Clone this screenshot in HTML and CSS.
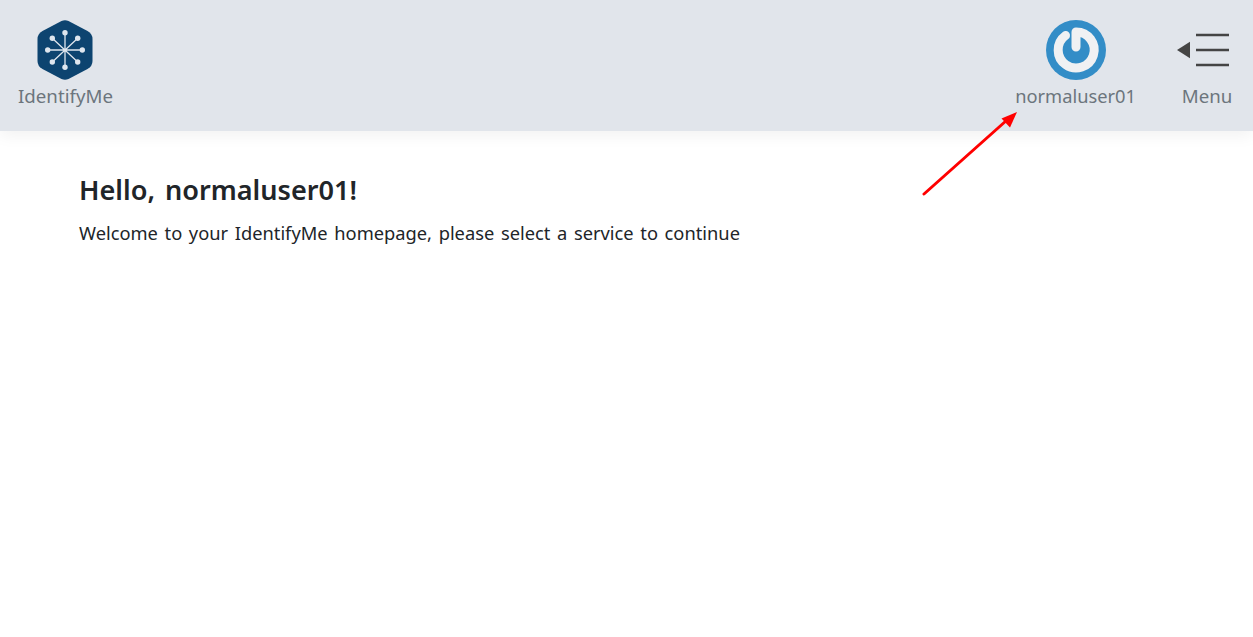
FILE: index.html
```html
<!DOCTYPE html>
<html lang="en">
<head>
<meta charset="utf-8">
<title>IdentifyMe</title>
<link rel="stylesheet" href="styles.css">
</head>
<body>
<header class="topbar">
  <a class="nav-item brand">
    <svg class="icon-logo" viewBox="0 0 56 60" width="56" height="60">
      <path d="M24.500 1 Q28 -0.600 31.500 1 L50.500 11 Q55.500 13.800 55.500 19 L55.500 41 Q55.500 46.200 50.500 49 L31.500 59 Q28 60.600 24.500 59 L5.500 49 Q0.500 46.200 0.500 41 L0.500 19 Q0.500 13.800 5.500 11 Z" fill="#0d4470"/>
      <g stroke="#dfe6ee" stroke-width="1.300">
        <path d="M28 12.700 V47.300 M10.700 30 H45.300 M15.300 18.300 L40.700 42 M40.700 18.300 L15.300 42"/>
      </g>
      <g fill="#dfe6ee">
        <circle cx="28" cy="12.700" r="2.700"/><circle cx="28" cy="47.300" r="2.700"/>
        <circle cx="10.700" cy="30" r="2.700"/><circle cx="45.300" cy="30" r="2.700"/>
        <circle cx="15.300" cy="18.300" r="2.700"/><circle cx="40.700" cy="18.300" r="2.700"/>
        <circle cx="15.300" cy="42" r="2.700"/><circle cx="40.700" cy="42" r="2.700"/>
      </g>
    </svg>
    <span class="nav-label">IdentifyMe</span>
  </a>
  <div class="nav-right">
    <a class="nav-item user">
      <svg class="icon-power" viewBox="0 0 60 60" width="60" height="60">
        <circle cx="30" cy="30" r="30" fill="#338dc7"/>
        <path d="M19.500 15.500 A18 18 0 1 0 30 12 V27" fill="none" stroke="#f0f1f3" stroke-width="9" stroke-linecap="round" stroke-linejoin="round"/>
      </svg>
      <span class="nav-label">normaluser01</span>
    </a>
    <a class="nav-item menu">
      <svg class="icon-menu" viewBox="0 0 60 60" width="60" height="60">
        <path d="M0 30 L13 21.700 V38.300 Z" fill="#444"/>
        <path d="M19 15 H52 M19 30 H52 M19 45 H52" stroke="#444" stroke-width="2.600" fill="none"/>
      </svg>
      <span class="nav-label">Menu</span>
    </a>
  </div>
</header>
<main class="content">
  <h1 class="greeting">Hello, normaluser01!</h1>
  <p class="lead">Welcome to your IdentifyMe homepage, please select a service to continue</p>
</main>
<svg class="annotation" viewBox="0 0 100 90" width="100" height="90">
  <path d="M2 83 L85 9" stroke="#ff0000" stroke-width="3" stroke-linecap="round" fill="none"/>
  <path d="M95 1 L79.500 7.500 L88 16.500 Z" fill="#ff0000"/>
</svg>
</body>
</html>
```
FILE: styles.css
```css
* { box-sizing: border-box; }
html, body { margin: 0; padding: 0; height: 100%; background: #fff; overflow: hidden; }
body { font-family: "Noto Sans", "Open Sans", sans-serif; color: #212529; position: relative; }
.topbar {
  height: 131px;
  background: #e1e5eb;
  box-shadow: 0 4px 16px rgba(0, 0, 0, 0.06);
  display: flex;
  justify-content: space-between;
  padding: 20px 16px 0 18px;
}
.nav-right { display: flex; gap: 41px; }
.nav-item { display: flex; flex-direction: column; align-items: center; }
.nav-item svg { display: block; }
.nav-label {
  display: block;
  font-size: 18.700px;
  line-height: 24px;
  margin-top: 4px;
  color: #6c757d;
  white-space: nowrap;
}
.user .nav-label { font-size: 18.300px; }
.content { padding: 41px 79px 0; }
.greeting {
  margin: 0;
  font-size: 27.100px;
  line-height: 36px;
  font-weight: 600;
  word-spacing: 3px;
  color: #212529;
}
.lead {
  margin: 11px 0 0;
  font-size: 18.300px;
  line-height: 27px;
  word-spacing: 1.900px;
  color: #212529;
}
.annotation { position: absolute; left: 922px; top: 111px; }
```
